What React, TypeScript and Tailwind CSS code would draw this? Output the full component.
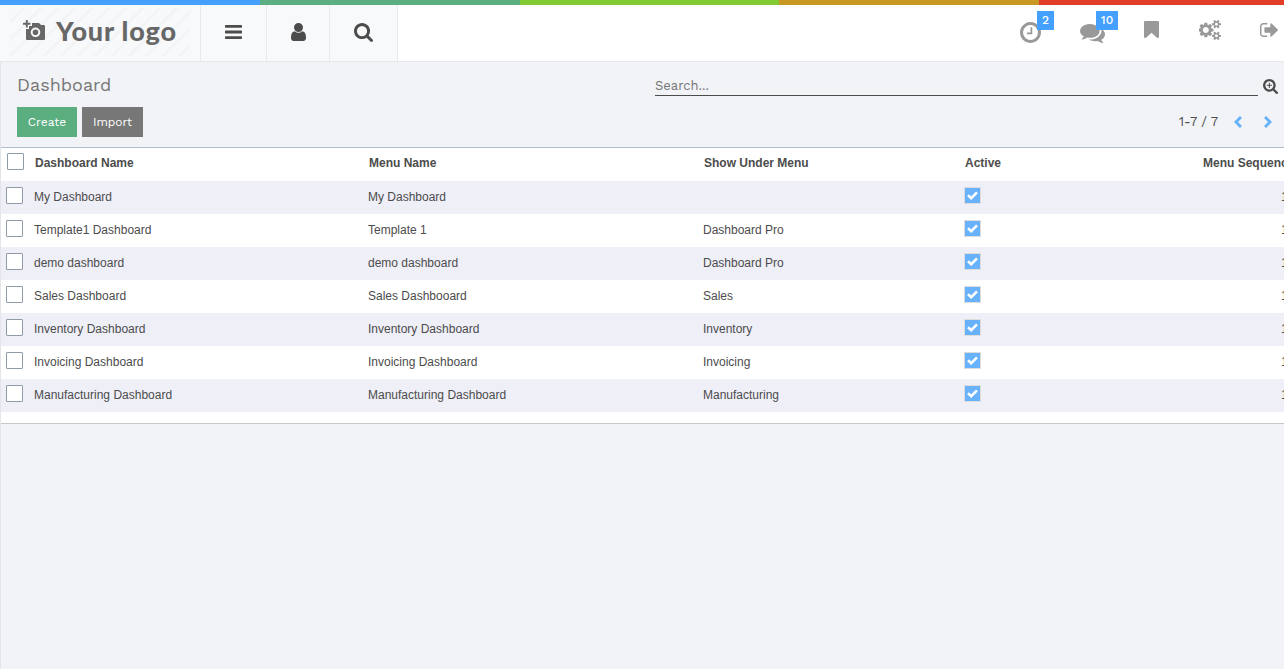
import React from "react";

const ICONS = {
  bars: "M1664 1344v128q0 26-19 45t-45 19h-1408q-26 0-45-19t-19-45v-128q0-26 19-45t45-19h1408q26 0 45 19t19 45zm0-512v128q0 26-19 45t-45 19h-1408q-26 0-45-19t-19-45v-128q0-26 19-45t45-19h1408q26 0 45 19t19 45zm0-512v128q0 26-19 45t-45 19h-1408q-26 0-45-19t-19-45v-128q0-26 19-45t45-19h1408q26 0 45 19t19 45z",
  user: "M1536 1399q0 109-62.5 187t-150.5 78h-854q-88 0-150.5-78t-62.5-187q0-85 8.5-160.5t31.5-152 58.5-131 94-89 134.5-34.5q131 128 313 128t313-128q76 0 134.5 34.5t94 89 58.5 131 31.5 152 8.5 160.5zm-256-887q0 159-112.5 271.5t-271.5 112.5-271.5-112.5-112.5-271.5 112.5-271.5 271.5-112.5 271.5 112.5 112.5 271.5z",
  search: "M1216 832q0-185-131.5-316.5t-316.5-131.5-316.5 131.5-131.5 316.5 131.5 316.5 316.5 131.5 316.5-131.5 131.5-316.5zm512 832q0 52-38 90t-90 38q-54 0-90-38l-343-342q-179 124-399 124-143 0-273.5-55.5t-225-150-150-225-55.5-273.5 55.5-273.5 150-225 225-150 273.5-55.5 273.5 55.5 225 150 150 225 55.5 273.5q0 220-124 399l343 343q37 37 37 90z",
  plus: "M480 776h232v-232h112v232h232v112h-232v232h-112v-232h-232z",
  clock: "M1024 544v448q0 14-9 23t-23 9h-320q-14 0-23-9t-9-23v-64q0-14 9-23t23-9h224v-352q0-14 9-23t23-9h64q14 0 23 9t9 23zm416 352q0-148-73-273t-198-198-273-73-273 73-198 198-73 273 73 273 198 198 273 73 273-73 198-198 73-273zm224 0q0 209-103 385.5t-279.5 279.5-385.5 103-385.5-103-279.5-279.5-103-385.5 103-385.5 279.5-279.5 385.5-103 385.5 103 279.5 279.5 103 385.5z",
  comments: "M1408 768q0 139-94 257t-256.5 186.5-353.5 68.5q-86 0-176-16-124 88-278 128-36 9-86 16h-3q-11 0-20.5-8t-11.5-21q-1-3-1-6.5t.5-6.5 2-6l2.5-5 3.5-5.5 4-5 4.5-5 4-4.5q5-6 23-25t26-29.5 22.5-29 25-38.5 20.5-44q-124-72-195-177t-71-224q0-139 94-257t256.5-186.5 353.5-68.5 353.5 68.5 256.5 186.5 94 257zm384 256q0 120-71 224.5t-195 176.5q10 24 20.5 44t25 38.5 22.5 29 26 29.5 23 25q1 1 4 4.5t4.5 5 4 5 3.5 5.5l2.5 5 2 6 .5 6.5-1 6.5q-3 14-13 22t-22 7q-50-7-86-16-154-40-278-128-90 16-176 16-271 0-472-132 58 4 88 4 161 0 309-45t264-129q125-92 192-212t67-254q0-77-23-152 129 71 204 178t75 230z",
  bookmark: "M1420 128q23 0 44 9 33 13 52.5 41t19.5 62v1289q0 34-19.5 62t-52.5 41q-19 8-44 8-48 0-83-32l-441-424-441 424q-36 33-83 33-23 0-44-9-33-13-52.5-41t-19.5-62v-1289q0-34 19.5-62t52.5-41q21-9 44-9h1048z",
  cogs: "M832 896q0-106-75-181t-181-75-181 75-75 181 75 181 181 75 181-75 75-181zm768 512q0-52-38-90t-90-38-90 38-38 90q0 53 37.5 90.5t90.5 37.5 90.5-37.5 37.5-90.5zm0-1024q0-52-38-90t-90-38-90 38-38 90q0 53 37.5 90.5t90.5 37.5 90.5-37.5 37.5-90.5zm-384 421v185q0 10-7 19.5t-16 10.5l-155 24q-11 35-32 76 34 48 90 115 7 11 7 20 0 12-7 19-23 30-82.5 89.5t-78.5 59.5q-11 0-21-7l-115-90q-37 19-77 31-11 108-23 155-7 24-30 24h-186q-11 0-20-7.5t-10-17.5l-23-153q-34-10-75-31l-118 89q-7 7-20 7-11 0-21-8-144-133-144-160 0-9 7-19 10-14 41-53t47-61q-23-44-35-82l-152-24q-10-1-17-9.5t-7-19.5v-185q0-10 7-19.5t16-10.5l155-24q11-35 32-76-34-48-90-115-7-11-7-20 0-12 7-20 22-30 82-89t79-59q11 0 21 7l115 90q34-18 77-32 11-108 23-154 7-24 30-24h186q11 0 20 7.5t10 17.5l23 153q34 10 75 31l118-89q8-7 20-7 11 0 21 8 144 133 144 160 0 8-7 19-12 16-42 54t-45 60q23 48 34 82l152 23q10 2 17 10.5t7 19.5zm640 533v140q0 16-149 31-12 27-30 52 51 113 51 138 0 4-4 7-122 71-124 71-8 0-46-47t-52-68q-20 2-30 2t-30-2q-14 21-52 68t-46 47q-2 0-124-71-4-3-4-7 0-25 51-138-18-25-30-52-149-15-149-31v-140q0-16 149-31 13-29 30-52-51-113-51-138 0-4 4-7 4-2 35-20t59-34 30-16q8 0 46 46.5t52 67.5q20-2 30-2t30 2q51-71 92-112l6-2q4 0 124 70 4 3 4 7 0 25-51 138 17 23 30 52 149 15 149 31zm0-1024v140q0 16-149 31-12 27-30 52 51 113 51 138 0 4-4 7-122 71-124 71-8 0-46-47t-52-68q-20 2-30 2t-30-2q-14 21-52 68t-46 47q-2 0-124-71-4-3-4-7 0-25 51-138-18-25-30-52-149-15-149-31v-140q0-16 149-31 13-29 30-52-51-113-51-138 0-4 4-7 4-2 35-20t59-34 30-16q8 0 46 46.5t52 67.5q20-2 30-2t30 2q51-71 92-112l6-2q4 0 124 70 4 3 4 7 0 25-51 138 17 23 30 52 149 15 149 31z",
  signOut: "M704 1440q0 4 1 20t.5 26.5-3 23.5-10 19.5-20.5 6.5h-320q-119 0-203.5-84.5t-84.5-203.5v-704q0-119 84.5-203.5t203.5-84.5h320q13 0 22.5 9.5t9.5 22.5q0 4 1 20t.5 26.5-3 23.5-10 19.5-20.5 6.5h-320q-66 0-113 47t-47 113v704q0 66 47 113t113 47h312l11.5 1 11.5 3 8 5.5 7 9 2 13.5zm928-544q0 26-19 45l-544 544q-19 19-45 19t-45-19-19-45v-288h-448q-26 0-45-19t-19-45v-384q0-26 19-45t45-19h448v-288q0-26 19-45t45-19 45 19l544 544q19 19 19 45z",
};

function Icon({ d, box, className }: { d: string; box: string; className: string }) {
  return (
    <svg viewBox={box} className={`block shrink-0 fill-current ${className}`} preserveAspectRatio="none">
      <path d={d} />
    </svg>
  );
}

const ROWS = [
  ["My Dashboard", "My Dashboard", ""],
  ["Template1 Dashboard", "Template 1", "Dashboard Pro"],
  ["demo dashboard", "demo dashboard", "Dashboard Pro"],
  ["Sales Dashboard", "Sales Dashbooard", "Sales"],
  ["Inventory Dashboard", "Inventory Dashboard", "Inventory"],
  ["Invoicing Dashboard", "Invoicing Dashboard", "Invoicing"],
  ["Manufacturing Dashboard", "Manufacturing Dashboard", "Manufacturing"],
];

const GRID = "grid w-[1310px] grid-cols-[33px_334px_335px_261px_238px_109px]";

function Box() {
  return <span className="block size-[17px] rounded-[1px] border border-[#8f9ba6] bg-white" />;
}

function Checked() {
  return (
    <span className="mt-[6px] flex size-[17px] items-center justify-center border border-[#dddddd] bg-[#67b2fa]">
      <svg viewBox="0 0 11 9" className="h-[9px] w-[11px]" fill="none" stroke="#fff" strokeWidth="2.6">
        <path d="M1 4.2L4.2 7.2L10 1.3" />
      </svg>
    </span>
  );
}

export default function App() {
  return (
    <div className="flex h-[669px] w-[1284px] flex-col overflow-hidden bg-[#f2f3f7] font-['Work_Sans','Inter',sans-serif] text-[#4c4c4c]">
      <div className="grid h-[5px] shrink-0 grid-cols-[260px_260px_259px_260px_245px]">
        <div className="bg-[#459ffc]" />
        <div className="bg-[#5bae7f]" />
        <div className="bg-[#83c933]" />
        <div className="bg-[#c79922]" />
        <div className="bg-[#e23d28]" />
      </div>

      <header className="flex h-[57px] shrink-0 border-b border-[#e7e8ec] bg-white">
        <div className="w-[201px] border-r border-[#e7e9ec] bg-[#f8f9fb] pl-[10px] pt-[3px]">
          <div className="flex h-[48px] w-[180px] bg-[repeating-linear-gradient(135deg,#f8f9fb_0px,#f8f9fb_8px,#f3f4f6_9px,#f3f4f6_11px,#f8f9fb_12px)] text-[#676767]">
            <svg viewBox="0 0 22 21" className="ml-[13px] mt-[12px] h-[21px] w-[22px]">
              <path fill="currentColor" fillRule="evenodd" d="M9 3h7l2 2h3a1 1 0 0 1 1 1v13a1 1 0 0 1-1 1H4a1 1 0 0 1-1-1V9h3V6h3zM12.5 7.5a4.8 4.8 0 1 0 0 9.6a4.8 4.8 0 0 0 0-9.6zm0 2a2.8 2.8 0 1 1 0 5.6a2.8 2.8 0 0 1 0-5.6z" />
              <path stroke="currentColor" strokeWidth="1.9" d="M3.8 0v7.5M0 3.8h7.5" />
            </svg>
            <span className="ml-[11px] mt-[6px] whitespace-nowrap font-['Lato'] text-[27px] font-black leading-[34px] tracking-[0.8px]">Your logo</span>
          </div>
        </div>
        <div className="w-[66px] border-r border-[#e7e9ec] bg-[#f8f9fb] pl-[24px] pt-[20px]">
          <Icon d={ICONS.bars} box="128 256 1536 1280" className="h-[14px] w-[17px]" />
        </div>
        <div className="w-[63px] border-r border-[#e7e9ec] bg-[#f8f9fb] pl-[24px] pt-[18px]">
          <Icon d={ICONS.user} box="256 128 1280 1536" className="h-[18px] w-[15px]" />
        </div>
        <div className="w-[68px] border-r border-[#e7e9ec] bg-[#f8f9fb] pl-[24px] pt-[18px]">
          <Icon d={ICONS.search} box="64 128 1664 1664" className="size-[19px]" />
        </div>
        <nav className="flex flex-1 items-start text-[#999999]">
          <div className="relative ml-[622px] mt-[17px]">
            <Icon d={ICONS.clock} box="128 128 1536 1536" className="size-[21px]" />
            <span className="absolute left-[17px] top-[-11px] flex h-[19px] w-[17px] items-center justify-center bg-[#459ffc] pb-px text-[12px] font-medium text-white">2</span>
          </div>
          <div className="relative ml-[39px] mt-[19px]">
            <Icon d={ICONS.comments} box="0 256 1792 1408" className="h-[19px] w-[25px]" />
            <span className="absolute left-[16px] top-[-13px] flex h-[19px] w-[22px] items-center justify-center bg-[#459ffc] pb-px text-[12px] font-medium text-white">10</span>
          </div>
          <Icon d={ICONS.bookmark} box="256 128 1280 1514" className="ml-[39px] mt-[16px] h-[17px] w-[15px]" />
          <Icon d={ICONS.cogs} box="0 16 1856 1760" className="ml-[40px] mt-[15px] h-[20px] w-[22px]" />
          <Icon d={ICONS.signOut} box="64 256 1568 1280" className="ml-[39px] mt-[18px] h-[14px] w-[18px]" />
        </nav>
      </header>

      <main className="flex flex-1 flex-col border-l border-[#e4e5e8]">
        <section className="flex h-[85px] shrink-0">
          <div className="w-[637px] pl-[16px] pt-[10px]">
            <h1 className="text-[18px] leading-[26px] text-[#777777]">Dashboard</h1>
            <div className="mt-[9px] flex gap-[5px] text-[12px] text-white">
              <button className="h-[30px] w-[60px] bg-[#5bae7f]">Create</button>
              <button className="h-[30px] w-[61px] bg-[#777777]">Import</button>
            </div>
          </div>
          <div className="flex-1 pl-[17px]">
            <div className="flex">
              <div className="h-[34px] w-[603px] border-b border-[#4c4c4c] pt-[14px] text-[13px] leading-[20px] text-[#777777]">Search...</div>
              <Icon d={ICONS.search + ICONS.plus} box="64 128 1664 1664" className="ml-[5px] mt-[17px] size-[15px]" />
            </div>
            <div className="mt-[16px] flex h-[20px] items-center pl-[524px] text-[13px]">
              <span className="w-[55px] whitespace-nowrap">1-7 / 7</span>
              <svg viewBox="0 0 8 12" className="h-[12px] w-[8px]" fill="none" stroke="#67b2fa" strokeWidth="3"><path d="M7 1L2 6L7 11" /></svg>
              <svg viewBox="0 0 8 12" className="ml-[22px] h-[12px] w-[8px]" fill="none" stroke="#67b2fa" strokeWidth="3"><path d="M1 1L6 6L1 11" /></svg>
            </div>
          </div>
        </section>

        <section className="h-[277px] overflow-hidden border-y border-b-[#c4c8cd] border-t-[#b2bece] bg-white font-['Liberation_Sans',Arial,sans-serif] text-[12px] leading-[32px]">
          <div className={`${GRID} h-[33px] pl-px font-bold leading-[30px]`}>
            <div className="pl-[5px] pt-[5px]"><Box /></div>
            <div>Dashboard Name</div>
            <div>Menu Name</div>
            <div>Show Under Menu</div>
            <div>Active</div>
            <div className="whitespace-nowrap">Menu Sequence</div>
          </div>
          {ROWS.map(([name, menu, under]) => (
            <div key={name} className={`${GRID} h-[33px] odd:bg-white even:bg-[#efeff8]`}>
              <div className="pl-[5px] pt-[6px]"><Box /></div>
              <div>{name}</div>
              <div>{menu}</div>
              <div>{under}</div>
              <div><Checked /></div>
              <div className="pl-[79px]">10</div>
            </div>
          ))}
        </section>
      </main>
    </div>
  );
}
